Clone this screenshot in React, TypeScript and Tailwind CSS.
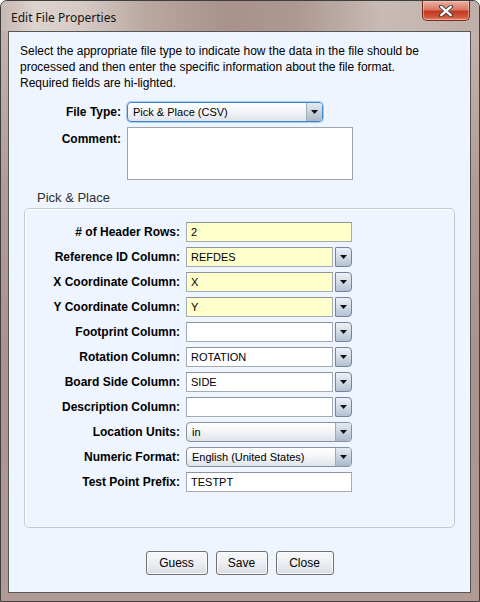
import React from 'react';

const sans = "font-['Liberation_Sans',Arial,sans-serif]";

function Arrow() {
  return (
    <svg width="7" height="4" viewBox="0 0 7 4">
      <path d="M0 0H7L3.5 4Z" fill="#111" />
    </svg>
  );
}

// text field, optionally with a dropdown button beside it
function Field({ value, yellow, combo }: { value: string; yellow?: boolean; combo?: boolean }) {
  const box = `h-[20px] border border-[#a3abb5] border-t-[#8c949e] flex items-center pl-[4px] text-[11px] text-black ${
    yellow ? 'bg-[#ffffcc]' : 'bg-white'
  }`;
  if (!combo) return <div className={`${box} w-[166px]`}>{value}</div>;
  return (
    <div className="flex w-[166px] gap-[2px]">
      <div className={`${box} w-[147px]`}>{value}</div>
      <div className="h-[20px] w-[17px] flex items-center justify-center border border-[#76839a] rounded-r-[4px] rounded-l-[1px] bg-[linear-gradient(180deg,#eef2f7_0%,#d2dbe6_50%,#b3c1d2_100%)]">
        <Arrow />
      </div>
    </div>
  );
}

function Select({ value, width, focused }: { value: string; width: number; focused?: boolean }) {
  return (
    <div
      className={`flex h-[20px] rounded-[4px] border overflow-hidden bg-[linear-gradient(180deg,#ffffff_0%,#f2f4f7_50%,#dfe3e9_100%)] ${
        focused ? 'border-[#3f86c9] shadow-[0_0_0_1px_#a9cdee]' : 'border-[#8692a3]'
      }`}
      style={{ width }}
    >
      <div className="flex-1 flex items-center pl-[5px] text-[11px] text-black">{value}</div>
      <div className="w-[16px] flex items-center justify-center border-l border-[#a0abba] bg-[linear-gradient(180deg,#e4eaf1_0%,#c9d3df_50%,#a9b8ca_100%)]">
        <Arrow />
      </div>
    </div>
  );
}

const rows: { label: string; el: React.ReactNode }[] = [
  { label: '# of Header Rows:', el: <Field value="2" yellow /> },
  { label: 'Reference ID Column:', el: <Field value="REFDES" yellow combo /> },
  { label: 'X Coordinate Column:', el: <Field value="X" yellow combo /> },
  { label: 'Y Coordinate Column:', el: <Field value="Y" yellow combo /> },
  { label: 'Footprint Column:', el: <Field value="" combo /> },
  { label: 'Rotation Column:', el: <Field value="ROTATION" combo /> },
  { label: 'Board Side Column:', el: <Field value="SIDE" combo /> },
  { label: 'Description Column:', el: <Field value="" combo /> },
  { label: 'Location Units:', el: <Select value="in" width={166} /> },
  { label: 'Numeric Format:', el: <Select value="English (United States)" width={166} /> },
  { label: 'Test Point Prefix:', el: <Field value="TESTPT" /> },
];

function Btn({ children, w }: { children: React.ReactNode; w: number }) {
  return (
    <button
      className="h-[24px] rounded-[3px] border border-[#707070] bg-[linear-gradient(180deg,#f7f8fa_0%,#eceef2_50%,#d9dce3_100%)] text-[12px] text-black shadow-[inset_0_0_0_1px_#fbfbfc]"
      style={{ width: w }}
    >
      {children}
    </button>
  );
}

export default function App() {
  return (
    <div className={`w-[480px] h-[602px] ${sans}`}>
      <div className="w-full h-full flex flex-col rounded-t-[7px] border border-[#3e3e3e] bg-[linear-gradient(180deg,#c7b7b1_0%,#b29d96_30%,#a9938c_60%,#b19c95_100%)] overflow-hidden">
        {/* title bar */}
        <div className="h-[30px] flex items-start justify-between pl-[10px] pr-[9px] bg-[linear-gradient(90deg,#c6b7b1_0%,#ddd3cf_7%,#d6cac5_17%,#bba8a1_30%,#a8928b_48%,#ae9992_62%,#c8bbb6_80%,#bfaea8_100%)]">
          <div className="mt-[9px] text-[12px] leading-[16px] text-[#141414] font-['Noto_Sans',sans-serif]">
            Edit File Properties
          </div>
          <div className="w-[48px] h-[20px] rounded-b-[5px] border border-t-0 border-[#7b2a1e] bg-[linear-gradient(180deg,#eab0a3_0%,#d97a66_45%,#c2391f_55%,#d2583c_85%,#e08a6c_100%)] shadow-[inset_0_0_0_1px_rgba(255,220,210,0.45)] flex items-center justify-center">
            <svg width="14" height="12" viewBox="0 0 14 12">
              <path d="M2 1.5L12 10.5M12 1.5L2 10.5" stroke="#3d3d3d" strokeWidth="4" strokeLinecap="round" />
              <path d="M2.3 1.8L11.7 10.2M11.7 1.8L2.3 10.2" stroke="#ffffff" strokeWidth="2.4" strokeLinecap="round" />
            </svg>
          </div>
        </div>

        {/* client area */}
        <div className="flex-1 ml-[7px] mr-[8px] mb-[8px] border border-[#565656] bg-[#eef5fe] flex flex-col">
          <p className="pt-[11px] pl-[11px] text-[12px] leading-[16px] text-black">
            Select the appropriate file type to indicate how the data in the file should be
            <br />
            processed and then enter the specific information about the file format.
            <br />
            Required fields are hi-lighted.
          </p>

          <div className="mt-[11px] flex items-center gap-[6px]">
            <div className="w-[112px] text-right text-[12px] font-bold">File Type:</div>
            <Select value="Pick & Place (CSV)" width={196} focused />
          </div>

          <div className="mt-[5px] flex items-start gap-[6px]">
            <div className="w-[112px] pt-[3px] text-right text-[12px] font-bold">Comment:</div>
            <div className="w-[226px] h-[53px] bg-white border border-[#9aa3ae]" />
          </div>

          <div className="mt-[10px] pl-[28px] text-[13px] leading-[16px] text-[#2e2e2e]">Pick &amp; Place</div>

          <div className="mt-[2px] ml-[15px] w-[431px] h-[320px] rounded-[5px] border border-[#c4cbd3] shadow-[inset_1px_1px_0_#ffffff] pt-[13px] flex flex-col gap-[5px]">
            {rows.map((r) => (
              <div key={r.label} className="flex items-center gap-[6px]">
                <div className="w-[155px] text-right text-[12px] font-bold text-black">{r.label}</div>
                {r.el}
              </div>
            ))}
          </div>

          <div className="mt-[23px] flex justify-center gap-[8px]">
            <Btn w={62}>Guess</Btn>
            <Btn w={52}>Save</Btn>
            <Btn w={58}>Close</Btn>
          </div>
        </div>
      </div>
    </div>
  );
}
